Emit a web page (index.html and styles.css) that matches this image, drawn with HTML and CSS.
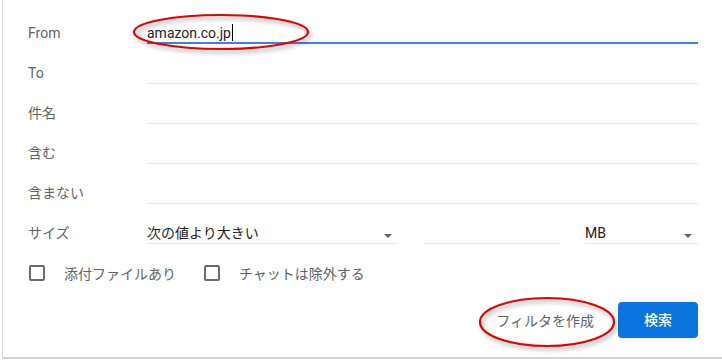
FILE: index.html
```html
<!DOCTYPE html>
<html>
  <head>
    <title>search options</title>
    <meta charset='utf-8'>
    <link rel="stylesheet" href="styles.css">
  </head>
  <body>
    <div class="dialog">
      <div class="row">
        <div class="label">From</div>
        <div class="field active">amazon.co.jp<span class="caret"></span></div>
      </div>
      <div class="row">
        <div class="label">To</div>
        <div class="field"></div>
      </div>
      <div class="row">
        <div class="label">件名</div>
        <div class="field"></div>
      </div>
      <div class="row">
        <div class="label">含む</div>
        <div class="field"></div>
      </div>
      <div class="row">
        <div class="label">含まない</div>
        <div class="field"></div>
      </div>
      <div class="row">
        <div class="label">サイズ</div>
        <div class="field select sel-op">次の値より大きい<span class="arrow"></span></div>
        <div class="field num"></div>
        <div class="field select sel-unit">MB<span class="arrow"></span></div>
      </div>

      <div class="checks">
        <span class="box"></span><span class="check-text">添付ファイルあり</span>
        <span class="box"></span><span class="check-text">チャットは除外する</span>
      </div>

      <div class="actions">
        <span class="link-btn">フィルタを作成</span>
        <span class="btn">検索</span>
      </div>

      <!-- 赤い丸の注釈 -->
      <svg class="mark mark-1" width="186" height="44"><ellipse cx="91" cy="19" rx="87" ry="17" /></svg>
      <svg class="mark mark-2" width="146" height="58"><ellipse cx="71" cy="27" rx="67" ry="24" /></svg>
    </div>
  </body>
</html>
```

FILE: styles.css
```css
body {
  margin: 0;
  background: #fff;
  font-family: Roboto, "Noto Sans CJK JP", sans-serif;
  font-size: 14px;
}

.dialog {
  position: relative;
  margin-left: 2px;
  height: 359px;
  border-left: 1px solid #dadada;
  border-bottom: 2px solid #d4d4d4;
  padding-left: 25px;
  padding-top: 4px;
  box-sizing: border-box;
}

.row {
  display: flex;
  height: 40px;
}

.label {
  width: 119px;
  padding-top: 19px;
  line-height: 20px;
  color: #5f6368;
}

.field {
  flex: 1;
  margin-right: 24px;
  padding-top: 19px;
  line-height: 20px;
  height: 20px;
  border-bottom: 1px solid #e8e8e8;
  color: #222;
}

.field.active {
  border-bottom: 2px solid #3f7fe6;
  height: 19px;
}

.caret {
  display: inline-block;
  width: 1px;
  height: 17px;
  background: #000;
  vertical-align: -3px;
  margin-left: 1px;
}

.select {
  position: relative;
}

.sel-op {
  flex: none;
  width: 251px;
  margin-right: 26px;
}

.num {
  flex: none;
  width: 136px;
  margin-right: 25px;
}

.sel-unit {
  flex: none;
  width: 113px;
}

.arrow {
  position: absolute;
  right: 6px;
  top: 30px;
  border-left: 4px solid transparent;
  border-right: 4px solid transparent;
  border-top: 4px solid #5f6368;
}

.checks {
  display: flex;
  align-items: center;
  margin-top: 19px;
  height: 20px;
  padding-left: 1px;
  color: #5f6368;
}

.box {
  width: 12px;
  height: 12px;
  border: 2px solid #6b6b6b;
  border-radius: 2px;
  margin-right: 19px;
}

.check-text {
  margin-right: 28px;
}

.actions {
  display: flex;
  justify-content: flex-end;
  align-items: center;
  margin-top: 19px;
  margin-right: 24px;
}

.link-btn {
  color: #5f6368;
  margin-right: 24px;
}

.btn {
  width: 80px;
  height: 36px;
  line-height: 36px;
  text-align: center;
  background: #0b74de;
  color: #fff;
  border-radius: 4px;
  font-weight: 500;
}

.mark {
  position: absolute;
  filter: drop-shadow(2px 3px 2px rgba(0, 0, 0, 0.35));
}

.mark ellipse {
  fill: none;
  stroke: #e60000;
  stroke-width: 2.2px;
}

.mark-1 {
  left: 127px;
  top: 13px;
}

.mark-2 {
  left: 473px;
  top: 295px;
}
```
